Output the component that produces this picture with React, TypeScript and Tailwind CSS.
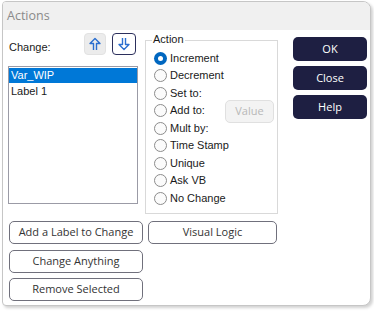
import React from "react";

const radios = [
  "Increment",
  "Decrement",
  "Set to:",
  "Add to:",
  "Mult by:",
  "Time Stamp",
  "Unique",
  "Ask VB",
  "No Change",
];

function Radio({ label, checked }: { label: string; checked?: boolean }) {
  return (
    <div className="flex items-center h-[17.5px] gap-[3px] whitespace-nowrap">
      {checked ? (
        <span className="w-[13px] h-[13px] rounded-full bg-[#0067c0] flex items-center justify-center shrink-0">
          <span className="w-[5px] h-[5px] rounded-full bg-white" />
        </span>
      ) : (
        <span className="w-[13px] h-[13px] rounded-full border border-[#8c8c8c] bg-[#fbfbfb] shrink-0" />
      )}
      <span className="text-[11px] leading-[13px] text-[#1a1a1a]">{label}</span>
    </div>
  );
}

function PlainButton({ label, className }: { label: string; className: string }) {
  return (
    <button
      className={`h-[23px] rounded-[5px] border border-[#70707c] bg-white text-[11px] text-[#333] font-['Open_Sans'] ${className}`}
    >
      {label}
    </button>
  );
}

function DarkButton({ label }: { label: string }) {
  return (
    <button className="h-[24px] w-[74px] rounded-[5px] bg-[#1e1f42] text-white text-[11px] font-medium font-['Open_Sans']">
      {label}
    </button>
  );
}

export default function App() {
  return (
    <div className="w-[374px] h-[311px] bg-white pt-[1px] pl-[2px] font-['Liberation_Sans',Arial,sans-serif]">
      {/* Dialog window */}
      <div className="w-[369px] h-[305px] border border-[#c6c6c6] rounded-tl-[4px] rounded-bl-[4px] rounded-tr-[8px] rounded-br-[8px] overflow-hidden bg-white shadow-[2px_2px_3px_rgba(0,0,0,0.18)] flex flex-col">
        {/* Title bar */}
        <div className="h-[28px] bg-[#f0f0f0] pl-[4px] flex items-center text-[12.5px] text-[#8a8a8a] font-['Open_Sans']">
          Actions
        </div>

        <div className="flex-1">
          <div className="flex items-start">
            {/* Change list */}
            <div className="ml-[5px] w-[130px] flex flex-col">
              <div className="flex h-[36px]">
                <div className="w-[76px] pl-[1px] pt-[11px] text-[11px] leading-[13px] text-[#1a1a1a]">Change:</div>
                <button className="mt-[3px] w-[22px] h-[22px] rounded-[4px] bg-[#ececec] border border-[#e2e2e2] flex items-center justify-center">
                  <svg width="12" height="14" viewBox="0 0 12 14" fill="none" stroke="#2b6fd0" strokeWidth="1.4" strokeLinejoin="round">
                    <path d="M4.5 13V6.5H1L6 1.5L11 6.5H7.5V13" />
                  </svg>
                </button>
                <button className="ml-[6px] mt-[3px] w-[24px] h-[22px] rounded-[4px] bg-white border border-[#2c2f5c] flex items-center justify-center">
                  <svg width="12" height="14" viewBox="0 0 12 14" fill="none" stroke="#2b6fd0" strokeWidth="1.4" strokeLinejoin="round">
                    <path d="M4.5 1V7.5H1L6 12.5L11 7.5H7.5V1" />
                  </svg>
                </button>
              </div>
              <div className="h-[138px] border border-[#9b9ba6] bg-white text-[11px] leading-[15px] pt-[1px]">
                <div className="h-[15px] bg-[#0078d7] text-white pl-[2px]">Var_WIP</div>
                <div className="h-[16px] leading-[16px] text-[#1a1a1a] pl-[2px]">Label 1</div>
              </div>
            </div>

            {/* Action group */}
            <div className="ml-[7px] mt-[10px] w-[133px] h-[174px] border border-[#d9d9d9] relative flex">
              <span className="absolute -top-[8px] left-[6px] bg-white px-[1px] text-[11px] leading-[13px] text-[#1a1a1a]">Action</span>
              <div className="w-[79px] pl-[8px] pt-[8.5px] flex flex-col">
                {radios.map((r, i) => (
                  <Radio key={r} label={r} checked={i === 0} />
                ))}
              </div>
              <button className="mt-[59px] w-[49px] h-[23px] rounded-[5px] bg-[#f3f3f3] border border-[#e0e0e0] text-[11px] text-[#b8b8b8] font-['Open_Sans']">
                Value
              </button>
            </div>

            {/* OK / Close / Help */}
            <div className="ml-[15px] mt-[7px] flex flex-col gap-[5px]">
              <DarkButton label="OK" />
              <DarkButton label="Close" />
              <DarkButton label="Help" />
            </div>
          </div>

          {/* Bottom buttons */}
          <div className="mt-[7px] ml-[6px] flex flex-col gap-[5.5px]">
            <div className="flex gap-[5px]">
              <PlainButton label="Add a Label to Change" className="w-[134px]" />
              <PlainButton label="Visual Logic" className="w-[129px]" />
            </div>
            <PlainButton label="Change Anything" className="w-[134px]" />
            <PlainButton label="Remove Selected" className="w-[134px]" />
          </div>
        </div>
      </div>
    </div>
  );
}
